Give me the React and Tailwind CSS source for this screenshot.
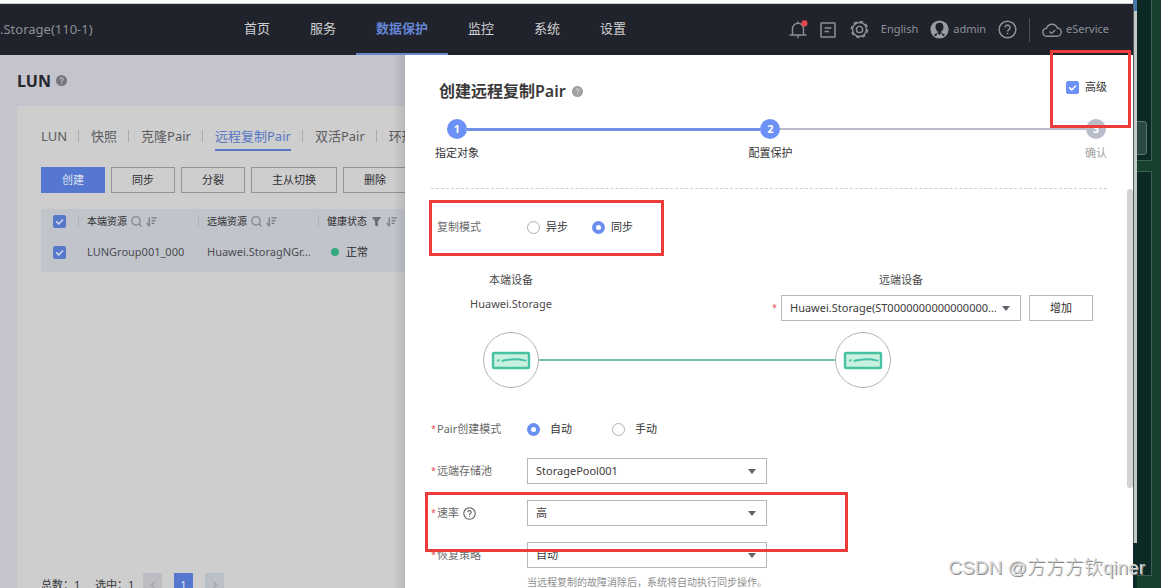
import React, { useState } from "react";
import { ChevronLeft, ChevronRight } from "lucide-react";

const navItems = ["首页", "服务", "数据保护", "监控", "系统", "设置"];

const tabs = ["LUN", "快照", "克隆Pair", "远程复制Pair", "双活Pair", "环形3DC"];

const actions = ["同步", "分裂", "主从切换", "删除"];

const HelpDot = ({ className }) => (
  <svg viewBox="0 0 12 12" className={`h-[11px] w-[11px] ${className}`}>
    <circle cx="6" cy="6" r="6" fill="currentColor" />
    <path
      d="M4.3 4.7a1.7 1.7 0 1 1 2.6 1.5c-.6.3-.9.6-.9 1.1M6 8.5v1"
      fill="none"
      stroke="#e8e8e8"
      strokeWidth="1"
    />
  </svg>
);

const HelpRing = ({ className }) => (
  <svg
    viewBox="0 0 20 20"
    fill="none"
    stroke="currentColor"
    strokeWidth="1.6"
    className={className}
  >
    <circle cx="10" cy="10" r="8.8" />
    <path d="M7.4 8a2.6 2.6 0 1 1 4 2.2c-.9.6-1.4 1-1.4 2M10 13.4v1.6" />
  </svg>
);

const SearchIcon = () => (
  <svg
    viewBox="0 0 12 12"
    fill="none"
    stroke="#797b82"
    strokeWidth="1.2"
    className="h-[11px] w-[11px] shrink-0"
  >
    <circle cx="5.4" cy="5.4" r="4.6" />
    <path d="M8.6 8.6l2.8 2.8" />
  </svg>
);

const SortIcon = () => (
  <svg
    viewBox="0 0 12 12"
    fill="none"
    stroke="#797b82"
    strokeWidth="1.5"
    className="h-[11px] w-[11px] shrink-0"
  >
    <path d="M3.5 1.500v9L.8 7.6M6 2h5.600M6 5h4.400M6 8h3.200" />
  </svg>
);

const FilterIcon = () => (
  <svg viewBox="0 0 12 12" fill="#6d6f76" className="h-[11px] w-[11px] shrink-0">
    <path d="M.8 1h10.400L7.600 5.600V11.500L4.400 10V5.600z" />
  </svg>
);

const Checkbox = ({ label, dim, text }) => (
  <label className="flex items-center gap-[6px] text-[11px] text-[#333]">
    <span className="relative flex h-[13px] w-[13px]">
      <input
        type="checkbox"
        defaultChecked
        aria-label={label}
        className={`peer h-[13px] w-[13px] appearance-none rounded-[2px] border border-[#aaa] ${
          dim
            ? "checked:border-[#5777cb] checked:bg-[#5777cb]"
            : "checked:border-[#6b91f7] checked:bg-[#6b91f7]"
        }`}
      />
      <svg
        viewBox="0 0 13 13"
        fill="none"
        stroke={dim ? "#d4d8e4" : "#fff"}
        strokeWidth="1.5"
        className="pointer-events-none absolute inset-0 hidden peer-checked:block"
      >
        <path d="M3.2 6.4l2.6 2.5 4.2-4.3" />
      </svg>
    </span>
    {text}
  </label>
);

const Radio = ({ name, text, defaultChecked, className }) => (
  <label className={`flex items-center text-[11px] text-[#333] ${className}`}>
    <input
      type="radio"
      name={name}
      defaultChecked={defaultChecked}
      className="h-[13px] w-[13px] appearance-none rounded-full border border-[#b0b0b0] bg-white checked:border-4 checked:border-[#6b8ff0]"
    />
    {text}
  </label>
);

const Select = ({ id, label, options }) => (
  <div className="relative w-60">
    <select
      id={id}
      aria-label={label}
      className="block h-[26px] w-full appearance-none border border-[#b5b7bb] bg-white pr-6 pl-2 text-[11px] text-[#3c3c3c]"
    >
      {options.map((option) => (
        <option key={option}>{option}</option>
      ))}
    </select>
    <svg
      viewBox="0 0 8 5"
      fill="#63646e"
      className="pointer-events-none absolute top-[11px] right-[11px] h-[5px] w-2"
    >
      <path d="M0 0h8L4 5z" />
    </svg>
  </div>
);

const FormRow = ({ label, htmlFor, required = true, help, children }) => (
  <div className="flex min-h-[26px] items-center">
    <div className="flex w-24 shrink-0 items-center text-[11px] text-[#6a6a6a]">
      <span className="w-[6px] text-[9px] text-[#e5484d]">{required && "*"}</span>
      {htmlFor ? <label htmlFor={htmlFor}>{label}</label> : <span>{label}</span>}
      {help && <HelpRing className="ml-1 h-[13px] w-[13px] text-[#555]" />}
    </div>
    {children}
  </div>
);

const Highlight = ({ className }) => (
  <div
    className={`pointer-events-none absolute z-10 border-[3px] border-[#ec3b3b] ${className}`}
  />
);

const DeviceNode = () => (
  <svg viewBox="0 0 56 56" fill="none" className="h-14 w-14 shrink-0">
    <circle cx="28" cy="28" r="27.5" stroke="#b3b3b3" />
    <rect
      x="10"
      y="21"
      width="36"
      height="15"
      rx="1"
      fill="#c9f1e2"
      stroke="#45c3a0"
      strokeWidth="2.4"
    />
    <path d="M14 28.4h2.4" stroke="#45c3a0" strokeWidth="2" />
    <path
      d="M19.5 28.8c6-1.6 15-2.2 23-.2"
      stroke="#45c3a0"
      strokeWidth="2"
      strokeLinecap="round"
    />
  </svg>
);

const Header = () => {
  const [active, setActive] = useState("数据保护");

  return (
    <header className="flex h-[51px] shrink-0 items-center bg-[#20232b] pr-6 text-[#8d9098]">
      <div className="w-56 shrink-0 text-[13px]">.Storage(110-1)</div>
      <nav className="flex h-full text-[13px]">
        {navItems.map((item) => (
          <a
            key={item}
            href="#"
            onClick={() => setActive(item)}
            className={`flex items-center border-b-2 px-5 whitespace-nowrap ${
              item === active
                ? "border-[#6d86c9] font-bold text-[#6585d4]"
                : "border-transparent text-[#d0d1d4]"
            }`}
          >
            {item}
          </a>
        ))}
      </nav>
      <div className="ml-auto flex items-center text-[11px]">
        <button aria-label="告警" className="mr-3">
          <svg
            viewBox="0 0 20 20"
            fill="none"
            stroke="currentColor"
            strokeWidth="1.4"
            className="h-5 w-5"
          >
            <path d="M1.500 15h17M4.500 15V8.800a5.500 5.500 0 0 1 11 0V15M10 3.300V1.600M10 15.500v2.500" />
            <circle cx="16.4" cy="3.4" r="3.1" fill="#e5484d" stroke="none" />
          </svg>
        </button>
        <button aria-label="任务" className="mr-[14px]">
          <svg
            viewBox="0 0 16 16"
            fill="none"
            stroke="currentColor"
            strokeWidth="1.5"
            className="h-4 w-4"
          >
            <rect x="1" y="1" width="14" height="14" rx="0.5" />
            <path d="M4.6 6h6.8M4.6 9.6h4.4" />
          </svg>
        </button>
        <button aria-label="设置" className="mr-3">
          <svg
            viewBox="0 0 20 20"
            fill="none"
            stroke="currentColor"
            className="h-[19px] w-[19px]"
          >
            <circle cx="10" cy="10" r="7.300" strokeWidth="1.500" />
            <circle
              cx="10"
              cy="10"
              r="8.500"
              strokeWidth="1.600"
              strokeDasharray="3.600 3.076"
            />
            <circle cx="10" cy="10" r="3.300" strokeWidth="1.500" />
          </svg>
        </button>
        <a href="#" className="mr-3">
          English
        </a>
        <a href="#" className="mr-3 flex items-center gap-1">
          <svg viewBox="0 0 20 20" className="h-[19px] w-[19px]">
            <circle cx="10" cy="10" r="9.6" fill="#9a9ca2" />
            <path
              d="M10 3a4.3 4.3 0 0 0-4.2 4.4c0 2 1 3.9 2.4 4.7v1.2L4 15.6A8.4 8.4 0 0 0 10 18a8.400 8.400 0 0 0 6-2.400l-4.200-2.300v-1.200c1.400-.8 2.400-2.700 2.400-4.700A4.300 4.300 0 0 0 10 3z"
              fill="#20232b"
            />
            <path d="M8.200 13.600l1.800 2.200 1.800-2.200 2.200 4-4 1-4-1z" fill="#9a9ca2" />
          </svg>
          admin
        </a>
        <button aria-label="帮助">
          <HelpRing className="h-[19px] w-[19px]" />
        </button>
        <span className="mx-3 h-6 w-px bg-[#494c54]" />
        <a href="#" className="flex items-center gap-1">
          <svg
            viewBox="0 0 20 16"
            fill="none"
            stroke="currentColor"
            strokeWidth="1.4"
            className="h-4 w-5"
          >
            <path d="M5 14.200a4 4 0 0 1-.4-8A5.600 5.600 0 0 1 15.200 6a4.100 4.100 0 0 1 0 8.200z" />
            <path d="M7.400 9.400l2.200 2 3.600-3.400" />
          </svg>
          eService
        </a>
      </div>
    </header>
  );
};

const LunPage = () => (
  <main className="relative w-[405px] shrink-0 overflow-hidden bg-[#c3c4cc] pl-[17px]">
    <div className="flex h-[51px] items-center gap-[5px]">
      <h1 className="text-base font-bold text-[#26272b]">LUN</h1>
      <HelpDot className="text-[#75777c]" />
    </div>
    <div className="h-full bg-[#cecece] pt-[18px] pl-6">
      <div className="flex items-start text-[13px] text-[#5c5c5f]">
        {tabs.map((tab, index) => (
          <React.Fragment key={tab}>
            {index > 0 && (
              <span className="mr-3 ml-[11px] mt-[6px] h-3 w-px shrink-0 bg-[#a9aaae]" />
            )}
            <button
              className={`h-[27px] border-b-2 whitespace-nowrap ${
                tab === "远程复制Pair"
                  ? "border-[#5777c4] text-[#5777c4]"
                  : "border-transparent"
              }`}
            >
              {tab}
            </button>
          </React.Fragment>
        ))}
      </div>

      <div className="mt-4 flex gap-[6px] text-[11px]">
        <button className="h-[26px] shrink-0 bg-[#5677cf] px-[21px] text-[#dde2ee]">
          创建
        </button>
        {actions.map((action) => (
          <button
            key={action}
            className="h-[26px] shrink-0 border border-[#90959b] px-5 whitespace-nowrap text-[#2d2d2f]"
          >
            {action}
          </button>
        ))}
      </div>

      <div className="mt-4 min-h-[364px]">
        <table className="w-[400px] table-fixed bg-[#c2c4cc] text-left text-[11px] text-[#4b4c50]">
          <thead>
            <tr className="h-6 text-[10px] text-[#2d2d2f]">
              <th className="w-[37px] pl-3">
                <Checkbox dim label="全选" />
              </th>
              <th className="w-[120px] font-normal">
                <div className="flex items-center gap-1 border-l border-[#b0b2b8] pl-2 leading-3">
                  本端资源
                  <SearchIcon />
                  <SortIcon />
                </div>
              </th>
              <th className="w-[120px] font-normal">
                <div className="flex items-center gap-1 border-l border-[#b0b2b8] pl-2 leading-3">
                  远端资源
                  <SearchIcon />
                  <SortIcon />
                </div>
              </th>
              <th className="font-normal">
                <div className="flex items-center gap-1 border-l border-[#b0b2b8] pl-2 leading-3">
                  健康状态
                  <FilterIcon />
                  <SortIcon />
                </div>
              </th>
            </tr>
          </thead>
          <tbody>
            <tr className="h-[39px]">
              <td className="pl-3">
                <Checkbox dim label="LUNGroup001_000" />
              </td>
              <td className="pl-[9px]">LUNGroup001_000</td>
              <td className="pl-[9px]">Huawei.StoragNGr...</td>
              <td className="pl-[13px] text-[#2d2d2f]">
                <span className="mr-[7px] inline-block h-2 w-2 rounded-full bg-[#35a881]" />
                正常
              </td>
            </tr>
          </tbody>
        </table>
      </div>

      <div className="flex h-6 items-center text-[11px] text-[#38383a]">
        <span className="w-[54px]">总数：1</span>
        <span className="w-12">选中：1</span>
        <div className="flex gap-3">
          <button
            aria-label="上一页"
            className="flex h-6 w-[19px] items-center justify-center bg-[#bbbdc2] text-[#8b8d92]"
          >
            <ChevronLeft className="h-3 w-3" />
          </button>
          <button className="h-6 w-[19px] bg-[#5677cf] text-[#dde2ee]">1</button>
          <button
            aria-label="下一页"
            className="flex h-6 w-[19px] items-center justify-center bg-[#bbc0c8] text-[#8b8d92]"
          >
            <ChevronRight className="h-3 w-3" />
          </button>
        </div>
      </div>
    </div>
    <div className="pointer-events-none absolute inset-y-0 right-0 w-3 bg-linear-to-r from-transparent to-black/10" />
  </main>
);

const Step = ({ number, text, done }) => (
  <li className="relative z-1 flex w-12 shrink-0 flex-col items-center gap-[6px]">
    <span
      className={`flex h-5 w-5 items-center justify-center rounded-full text-[11px] font-bold text-white ${
        done ? "bg-[#6b91f7]" : "bg-[#b9bcc9]"
      }`}
    >
      {number}
    </span>
    <span
      className={`text-[11px] leading-4 whitespace-nowrap ${
        done ? "text-[#333]" : "text-[#a3a3a3]"
      }`}
    >
      {text}
    </span>
  </li>
);

const CreatePairDrawer = () => (
  <section className="relative min-w-0 flex-1 overflow-hidden bg-white pt-6">
    <div className="relative flex h-6 items-start justify-between pr-[26px] pl-[34px]">
      <h2 className="flex items-center gap-[6px] text-base leading-6 font-semibold text-[#3a3a3a]">
        创建远程复制Pair
        <HelpDot className="text-[#a0a0a0]" />
      </h2>
      <div className="flex h-4 items-center">
        <Checkbox text="高级" />
      </div>
    </div>

    <ol className="mt-4 flex pr-[13px] pl-7">
      <Step number="1" text="指定对象" done />
      <li className="-mx-[14px] mt-[9px] h-[3px] flex-[24] bg-[#7090e8]" />
      <Step number="2" text="配置保护" done />
      <li className="-mx-[14px] mt-[9px] h-[2px] flex-[25] bg-[#b9bcc9]" />
      <Step number="3" text="确认" />
    </ol>

    <form className="mx-[26px] mt-[27px] border-t border-dashed border-[#cfcfcf] pt-[25px]">
      <div className="relative">
        <Highlight className="-top-[14px] -left-[2px] h-14 w-[235px]" />
        <FormRow label="复制模式" required={false}>
          <Radio name="mode" text="异步" className="gap-[6px]" />
          <Radio name="mode" text="同步" defaultChecked className="ml-6 gap-[6px]" />
        </FormRow>
      </div>

      <div className="mt-8 flex text-[11px] text-[#4a4a4a]">
        <div className="w-40 text-center">
          <div className="leading-4">本端设备</div>
          <div className="mt-2 leading-4">Huawei.Storage</div>
        </div>
        <div className="ml-auto pr-[14px]">
          <div className="ml-[9px] w-60 text-center leading-4">远端设备</div>
          <div className="mt-[7px] flex items-center">
            <span className="w-[9px] text-[9px] text-[#e5484d]">*</span>
            <Select
              label="远端设备"
              options={["Huawei.Storage(ST0000000000000000..."]}
            />
            <button
              type="button"
              className="ml-2 h-[26px] w-16 border border-[#b5b7bb] text-[#2b2b2b]"
            >
              增加
            </button>
          </div>
        </div>
      </div>

      <div className="mt-[11px] flex items-center pr-[216px] pl-[52px]">
        <DeviceNode />
        <div className="h-[2px] flex-1 bg-[#6fc3ad]" />
        <DeviceNode />
      </div>

      <div className="mt-7 flex flex-col gap-4">
        <FormRow label="Pair创建模式">
          <Radio name="pair" text="自动" defaultChecked className="gap-[10px]" />
          <Radio name="pair" text="手动" className="ml-10 gap-[10px]" />
        </FormRow>
        <FormRow label="远端存储池" htmlFor="pool">
          <Select id="pool" options={["StoragePool001"]} />
        </FormRow>
        <div className="relative">
          <Highlight className="-top-2 -left-[6px] h-[60px] w-[423px]" />
          <FormRow label="速率" htmlFor="rate" help>
            <Select id="rate" options={["高", "中", "低"]} />
          </FormRow>
        </div>
        <div>
          <FormRow label="恢复策略" htmlFor="recovery">
            <Select id="recovery" options={["自动", "手动"]} />
          </FormRow>
          <p className="mt-[6px] pl-24 text-[10px] leading-4 text-[#8f8f8f]">
            当远程复制的故障消除后，系统将自动执行同步操作。
          </p>
        </div>
      </div>
    </form>
    <div className="absolute top-[134px] right-0 h-[299px] w-[6px] rounded-full bg-[#d3d3d3]" />
  </section>
);

const Desktop = () => (
  <aside className="flex w-6 shrink-0 flex-col bg-[#17402f] pr-[9px]">
    <div className="h-[161px] border-r border-b border-[#3d5f54] bg-[#0d2925] pt-[121px]">
      <div className="h-[34px] w-[10px] rounded-r-sm border border-l-0 border-[#5d736d] bg-[#2c4a43]" />
    </div>
    <div className="mt-[10px] mb-3 flex-1 border-y border-r border-[#3d5f54] bg-[#0d2925]" />
  </aside>
);

const App = () => (
  <div className="relative flex h-screen overflow-hidden bg-[#0d2925] font-['Noto_Sans','Noto_Sans_CJK_SC',sans-serif]">
    <div className="flex min-w-0 flex-1 flex-col">
      <div className="h-1 shrink-0 border-b border-[#c9cdcc] bg-[#f8fcfa]" />
      <Header />
      <div className="relative flex min-h-0 flex-1">
        <LunPage />
        <CreatePairDrawer />
        <Highlight className="-top-[5px] right-[2px] h-[78px] w-[81px]" />
      </div>
    </div>
    <div className="mb-[45px] w-1 shrink-0 border-t-[11px] border-l border-t-[#4679a5] border-l-[#54595a] bg-[#c3c9c8]" />
    <Desktop />
    <div className="absolute right-4 bottom-[6px] z-20 font-['Liberation_Sans','Noto_Sans_CJK_SC',sans-serif] text-[19px] font-light text-[#dadada] [text-shadow:1px_1px_0_#8a8a8a]">
      CSDN @方方方钦qiner
    </div>
  </div>
);

export default App;
